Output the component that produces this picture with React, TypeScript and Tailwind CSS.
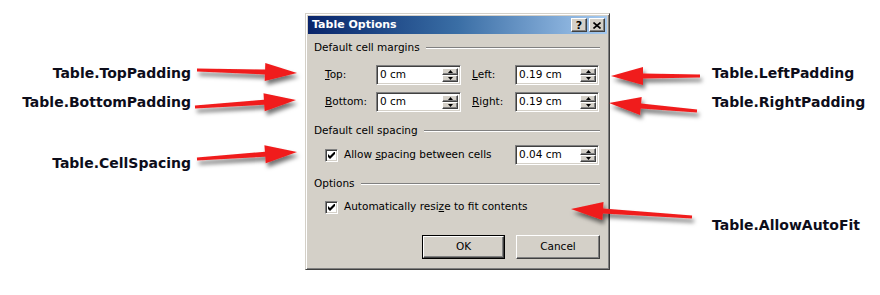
import React from 'react'

const arrows = [
  { x1: 197, y1: 70, x2: 297, y2: 73 },
  { x1: 195, y1: 107, x2: 296, y2: 100 },
  { x1: 197, y1: 159, x2: 297, y2: 152 },
  { x1: 700, y1: 76, x2: 611, y2: 76 },
  { x1: 697, y1: 111, x2: 609, y2: 103 },
  { x1: 692, y1: 217, x2: 571, y2: 209 },
]

function arrowPoints(a: { x1: number; y1: number; x2: number; y2: number }) {
  const dx = a.x2 - a.x1
  const dy = a.y2 - a.y1
  const len = Math.hypot(dx, dy)
  const ux = dx / len
  const uy = dy / len
  const nx = -uy
  const ny = ux
  const bx = a.x2 - ux * 32
  const by = a.y2 - uy * 32
  const p = (x: number, y: number) => `${x.toFixed(1)},${y.toFixed(1)}`
  return [
    p(a.x1 + nx * 1.5, a.y1 + ny * 1.5),
    p(bx + nx * 2.5, by + ny * 2.5),
    p(bx + nx * 9, by + ny * 9),
    p(a.x2, a.y2),
    p(bx - nx * 9, by - ny * 9),
    p(bx - nx * 2.5, by - ny * 2.5),
    p(a.x1 - nx * 1.5, a.y1 - ny * 1.5),
  ].join(' ')
}

function Spin() {
  return (
    <div className="flex w-[16px] flex-col">
      {[0, 1].map((i) => (
        <div
          key={i}
          className="flex h-[8px] items-center justify-center border border-t-white border-l-white border-r-[#404040] border-b-[#404040] bg-[#d4d0c8] shadow-[inset_-1px_-1px_#808080]"
        >
          <svg width="5" height="3" viewBox="0 0 5 3">
            {i === 0 ? <polygon points="2.5,0 5,3 0,3" fill="#000" /> : <polygon points="0,0 5,0 2.5,3" fill="#000" />}
          </svg>
        </div>
      ))}
    </div>
  )
}

function Field({ value, width }: { value: string; width: string }) {
  return (
    <div
      className={`flex h-[20px] ${width} items-stretch border border-t-[#808080] border-l-[#808080] border-r-white border-b-white bg-white shadow-[inset_1px_1px_#404040,inset_-1px_-1px_#d4d0c8] p-[2px]`}
    >
      <span className="flex flex-1 items-center pl-[1px]">{value}</span>
      <Spin />
    </div>
  )
}

function Check() {
  return (
    <div className="flex h-[13px] w-[13px] items-center justify-center border border-t-[#808080] border-l-[#808080] border-r-white border-b-white bg-white shadow-[inset_1px_1px_#404040,inset_-1px_-1px_#d4d0c8]">
      <svg width="7" height="7" viewBox="0 0 7 7">
        <path d="M0 2 L0 5 L2 7 L7 2 L7 -1 L2 4 Z" fill="#000" />
      </svg>
    </div>
  )
}

function GroupHead({ label, mt }: { label: string; mt: string }) {
  return (
    <div className={`${mt} flex h-[14px] items-center gap-[6px] pl-[6px] pr-[7px]`}>
      <span>{label}</span>
      <div className="h-[2px] flex-1 border-t border-t-[#808080] border-b border-b-white" />
    </div>
  )
}

function Btn({ label, isDefault }: { label: string; isDefault?: boolean }) {
  return (
    <div className={`h-[24px] ${isDefault ? 'w-[83px] border border-black' : 'w-[84px]'}`}>
      <div className="flex h-full w-full items-center justify-center border border-t-white border-l-white border-r-[#404040] border-b-[#404040] bg-[#d4d0c8] shadow-[inset_-1px_-1px_#808080]">
        {label}
      </div>
    </div>
  )
}

export default function App() {
  return (
    <div className="relative flex h-[295px] w-[880px] overflow-hidden bg-white font-['DejaVu_Sans',sans-serif]">
      {/* Left labels */}
      <div className="flex w-[305px] flex-col items-end pr-[114px] pt-[65px] text-[14px] font-bold leading-[16px] text-[#0d0d1a]">
        <span>Table.TopPadding</span>
        <span className="mt-[13px]">Table.BottomPadding</span>
        <span className="mt-[45px]">Table.CellSpacing</span>
      </div>

      {/* Dialog */}
      <div className="mt-[13px] flex h-[257px] w-[305px] flex-col border border-t-[#d4d0c8] border-l-[#d4d0c8] border-r-[#404040] border-b-[#404040] bg-[#d4d0c8] p-[2px] text-[10.5px] text-black shadow-[inset_1px_1px_#fff,inset_-1px_-1px_#808080]">
        <div className="flex h-[18px] items-center justify-between bg-gradient-to-r from-[#0a246a] via-[#3a6ea5] to-[#a6caf0] pl-[4px] pr-[2px]">
          <span className="text-[11px] font-bold text-white">Table Options</span>
          <div className="flex gap-[2px]">
            <div className="flex h-[14px] w-[16px] items-center justify-center border border-t-white border-l-white border-r-[#404040] border-b-[#404040] bg-[#d4d0c8] text-[11px] font-bold leading-none shadow-[inset_-1px_-1px_#808080]">
              ?
            </div>
            <div className="flex h-[14px] w-[16px] items-center justify-center border border-t-white border-l-white border-r-[#404040] border-b-[#404040] bg-[#d4d0c8] shadow-[inset_-1px_-1px_#808080]">
              <svg width="8" height="7" viewBox="0 0 8 7">
                <path d="M0.5 0.5 L7.5 6.5 M7.5 0.5 L0.5 6.5" stroke="#000" strokeWidth="1.6" />
              </svg>
            </div>
          </div>
        </div>

        <GroupHead label="Default cell margins" mt="mt-[7px]" />

        <div className="mt-[10px] flex items-center pl-[17px]">
          <span className="w-[51px]"><u>T</u>op:</span>
          <Field value="0 cm" width="w-[85px]" />
          <span className="ml-[11px] w-[43px]"><u>L</u>eft:</span>
          <Field value="0.19 cm" width="w-[84px]" />
        </div>
        <div className="mt-[7px] flex items-center pl-[17px]">
          <span className="w-[51px]"><u>B</u>ottom:</span>
          <Field value="0 cm" width="w-[85px]" />
          <span className="ml-[11px] w-[43px]"><u>R</u>ight:</span>
          <Field value="0.19 cm" width="w-[84px]" />
        </div>

        <GroupHead label="Default cell spacing" mt="mt-[12px]" />

        <div className="mt-[7px] flex items-center pl-[17px]">
          <Check />
          <span className="ml-[6px] w-[171px]">Allow <u>s</u>pacing between cells</span>
          <Field value="0.04 cm" width="w-[84px]" />
        </div>

        <GroupHead label="Options" mt="mt-[12px]" />

        <div className="mt-[6px] flex h-[20px] items-center pl-[17px]">
          <Check />
          <span className="ml-[6px]">Automatically resi<u>z</u>e to fit contents</span>
        </div>

        <div className="mt-[18px] flex justify-end gap-[11px] pr-[7px]">
          <Btn label="OK" isDefault />
          <Btn label="Cancel" />
        </div>
      </div>

      {/* Right labels */}
      <div className="flex flex-1 flex-col pl-[102px] pt-[65px] text-[14px] font-bold leading-[16px] text-[#0d0d1a]">
        <span>Table.LeftPadding</span>
        <span className="mt-[13px]">Table.RightPadding</span>
        <span className="mt-[107px]">Table.AllowAutoFit</span>
      </div>

      {/* Arrows */}
      <svg className="pointer-events-none absolute left-0 top-0" width="880" height="295">
        <defs>
          <filter id="sh" x="-20%" y="-100%" width="140%" height="300%">
            <feDropShadow dx="2" dy="4" stdDeviation="2" floodColor="#000" floodOpacity="0.55" />
          </filter>
        </defs>
        {arrows.map((a, i) => (
          <polygon key={i} points={arrowPoints(a)} fill="#f01c1c" filter="url(#sh)" />
        ))}
      </svg>
    </div>
  )
}
